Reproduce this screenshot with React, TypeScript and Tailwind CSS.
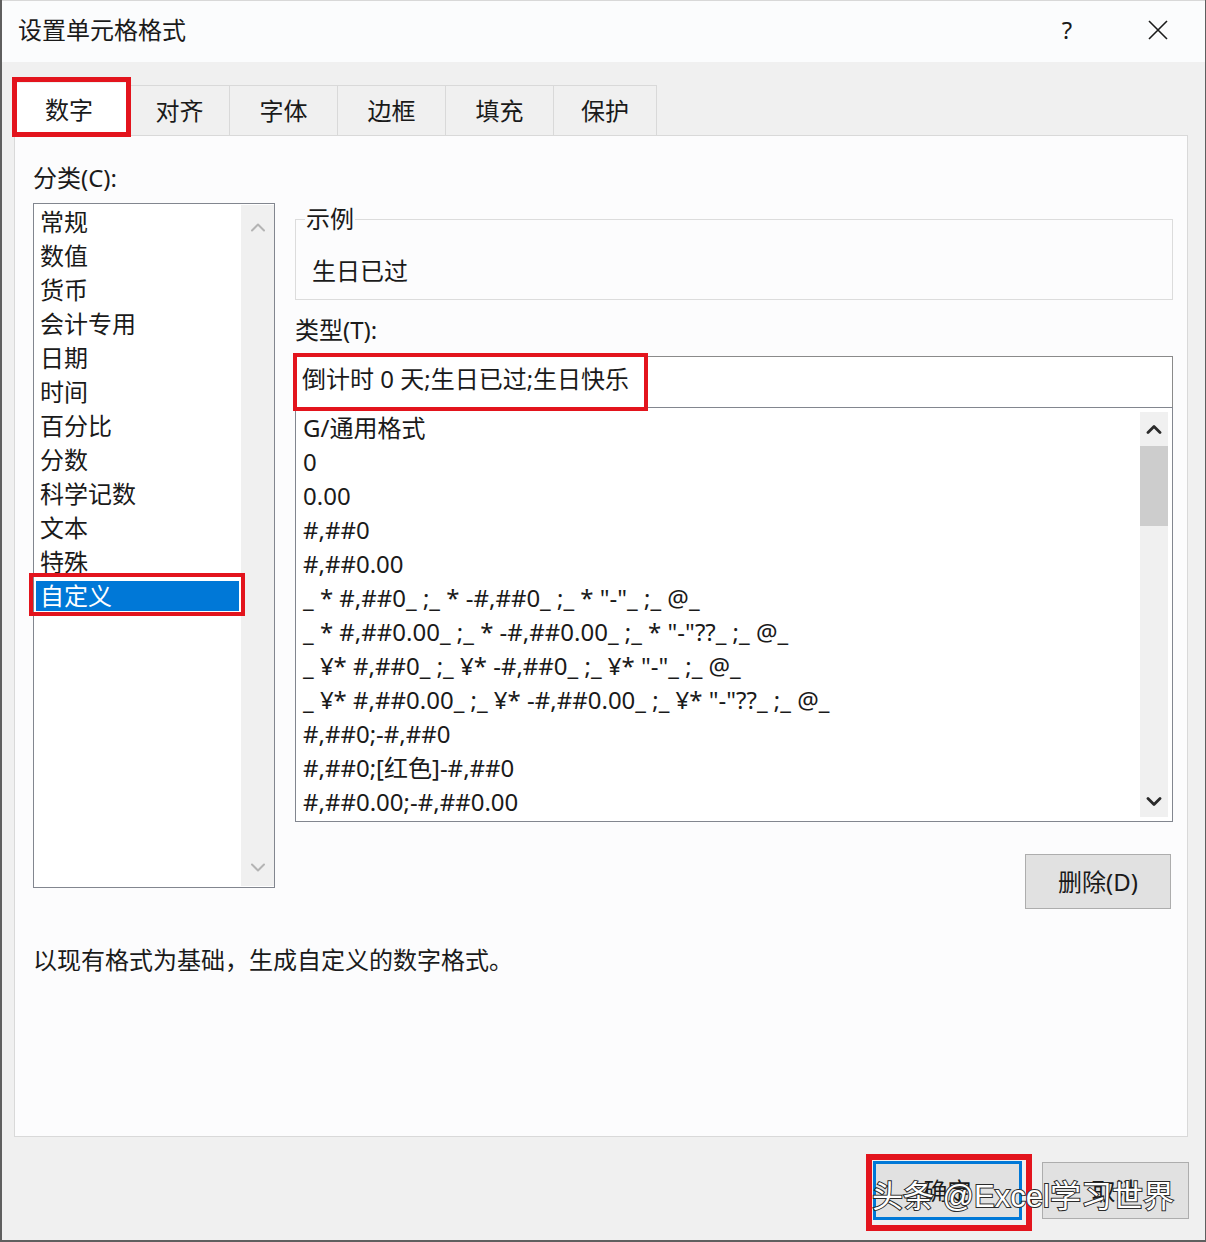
import React from "react";

const categories = ["常规", "数值", "货币", "会计专用", "日期", "时间", "百分比", "分数", "科学记数", "文本", "特殊", "自定义"];

const formats = [
  "G/通用格式",
  "0",
  "0.00",
  "#,##0",
  "#,##0.00",
  '_ * #,##0_ ;_ * -#,##0_ ;_ * "-"_ ;_ @_',
  '_ * #,##0.00_ ;_ * -#,##0.00_ ;_ * "-"??_ ;_ @_',
  '_ ¥* #,##0_ ;_ ¥* -#,##0_ ;_ ¥* "-"_ ;_ @_',
  '_ ¥* #,##0.00_ ;_ ¥* -#,##0.00_ ;_ ¥* "-"??_ ;_ @_',
  "#,##0;-#,##0",
  "#,##0;[红色]-#,##0",
  "#,##0.00;-#,##0.00",
];

const tabs = [
  { label: "对齐", w: "w-[100px]" },
  { label: "字体", w: "w-[108px]" },
  { label: "边框", w: "w-[108px]" },
  { label: "填充", w: "w-[108px]" },
  { label: "保护", w: "w-[103px]" },
];

function Chevron({ up, color, sw }: { up: boolean; color: string; sw: number }) {
  return (
    <svg width="16" height="10" viewBox="0 0 16 10">
      <path
        d={up ? "M2 8.5 L8 2.5 L14 8.5" : "M2 1.5 L8 7.5 L14 1.5"}
        fill="none"
        stroke={color}
        strokeWidth={sw}
        strokeLinecap="round"
        strokeLinejoin="round"
      />
    </svg>
  );
}

export default function App() {
  return (
    <div className="relative w-[1206px] h-[1242px] overflow-hidden bg-[#f0f0f0] border-l-2 border-b-2 border-r border-[#5f5f5f] text-[24px] text-[#1a1a1a] [font-family:'Noto_Sans','Noto_Sans_CJK_SC',sans-serif] leading-[30px]">
      {/* Title bar */}
      <div className="h-[62px] bg-[#fbfcfd] border-t border-[#d8d8d8] flex items-center pl-[16px] pb-[3px]">
        <div className="flex-1">设置单元格格式</div>
        <div className="w-[40px] text-center mr-[60px]">?</div>
        <div className="mr-[36px] flex items-center">
          <svg width="22" height="22" viewBox="0 0 22 22">
            <path d="M2 2 L20 20 M20 2 L2 20" stroke="#1a1a1a" strokeWidth="1.6" fill="none" />
          </svg>
        </div>
      </div>

      {/* Body */}
      <div className="pt-[23px] pl-[12px]">
        {/* Tabs */}
        <div className="flex h-[50px] items-end">
          <div className="relative z-10 w-[116px] h-[53px] -mb-px bg-white flex items-center justify-center pr-[6px]">
            数字
            <div className="absolute left-[-2px] top-[-6px] w-[119px] h-[60px] border-[5px] border-[#e3141d]" />
          </div>
          {tabs.map((t) => (
            <div
              key={t.label}
              className={`${t.w} h-[50px] border-t border-r border-[#d9d9d9] bg-[#f0f0f0] flex items-center justify-center`}
            >
              {t.label}
            </div>
          ))}
        </div>

        {/* Panel */}
        <div className="w-[1174px] h-[1002px] border border-[#d9d9d9] bg-[#fcfcfd] pt-[27px] pl-[18px]">
          <div className="flex">
            {/* Left column */}
            <div className="w-[242px] flex flex-col">
              <div className="h-[30px]">分类(C):</div>
              <div className="mt-[10px] h-[685px] border border-[#82868f] bg-white flex">
                <div className="relative flex-1 pt-[1px] px-[2px]">
                  {categories.map((c, i) =>
                    i === categories.length - 1 ? (
                      <div key={c} className="relative h-[34px] flex items-center">
                        <div className="w-full h-[30px] bg-[#0078d7] text-white pl-[4px] flex items-center">{c}</div>
                        <div className="absolute left-[-7px] top-[-6px] w-[216px] h-[43px] border-[4px] border-[#e3141d]" />
                      </div>
                    ) : (
                      <div key={c} className="h-[34px] flex items-center pl-[4px]">
                        {c}
                      </div>
                    )
                  )}
                </div>
                <div className="w-[33px] my-[1px] bg-[#f0f0f0] flex flex-col items-center justify-between pt-[17px] pb-[13px]">
                  <Chevron up color="#b4b4b4" sw={2} />
                  <Chevron up={false} color="#b4b4b4" sw={2} />
                </div>
              </div>
            </div>

            {/* Right column */}
            <div className="ml-[20px] w-[878px] flex flex-col">
              <fieldset className="mt-[44px] border border-[#dcdcdc] px-[9px] pb-[13px]">
                <legend className="leading-[24px] px-[1px]">示例</legend>
                <div className="mt-[25px] pl-[7px]">生日已过</div>
              </fieldset>
              <div className="mt-[15px]">类型(T):</div>
              <div className="relative mt-[11px] h-[51px] border-t border-x border-[#8a8a8a] bg-white pl-[6px] pt-[7px]">
                倒计时 0 天;生日已过;生日快乐
                <div className="absolute left-[-3px] top-[-4px] w-[355px] h-[58px] border-[4px] border-[#e3141d]" />
              </div>
              <div className="h-[415px] border border-[#82868f] bg-white flex">
                <div className="flex-1 pt-[3px] pl-[7px]">
                  {formats.map((f) => (
                    <div key={f} className="h-[34px] flex items-center whitespace-pre">
                      {f}
                    </div>
                  ))}
                </div>
                <div className="w-[28px] my-[4px] mr-[4px] bg-[#f0f0f0] flex flex-col items-center">
                  <div className="h-[34px] flex items-center justify-center">
                    <Chevron up color="#2a2a2a" sw={2.8} />
                  </div>
                  <div className="w-full h-[80px] bg-[#cdcdcd]" />
                  <div className="flex-1" />
                  <div className="h-[30px] flex items-center justify-center">
                    <Chevron up={false} color="#2a2a2a" sw={2.8} />
                  </div>
                </div>
              </div>
              <div className="mt-[32px] self-end mr-[2px] w-[146px] h-[55px] bg-[#e1e1e1] border border-[#adadad] flex items-center justify-center">
                删除(D)
              </div>
            </div>
          </div>
          <div className="mt-[36px]">以现有格式为基础，生成自定义的数字格式。</div>
        </div>

        {/* Buttons */}
        <div className="flex justify-end w-[1175px] pt-[25px] gap-[21px]">
          <div className="relative w-[147px] h-[57px] bg-[#e1e1e1] border-2 border-[#0078d7] outline outline-1 outline-[#0078d7] flex items-center justify-center">
            确定
            <div className="absolute left-[-10px] top-[-10px] w-[166px] h-[77px] border-[6px] border-[#e3141d]" />
          </div>
          <div className="w-[147px] h-[57px] bg-[#e1e1e1] border border-[#adadad] flex items-center justify-center">
            取消
          </div>
        </div>
      </div>

      {/* Watermark */}
      <div className="absolute left-[870px] top-[1177px] text-[31px] leading-[40px] text-white [font-family:'Liberation_Sans','Noto_Sans_CJK_SC',sans-serif] [-webkit-text-stroke:2px_#2a2a2a] [paint-order:stroke_fill] whitespace-pre">
        头条 @Excel学习世界
      </div>
    </div>
  );
}
